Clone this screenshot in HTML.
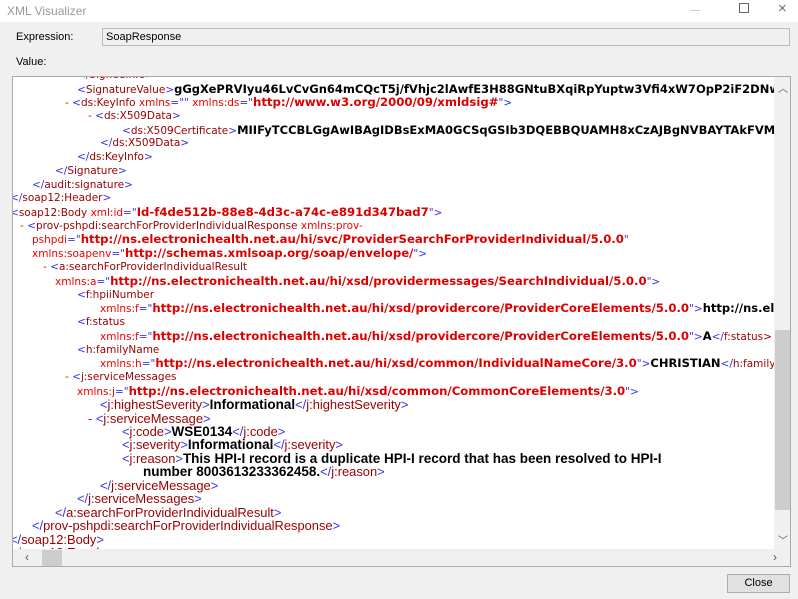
<!DOCTYPE html>
<html><head><meta charset="utf-8"><style>
*{margin:0;padding:0;box-sizing:border-box}
body{width:798px;height:599px;background:#f0f0f0;font-family:"Liberation Sans",sans-serif;position:relative;overflow:hidden}
.title{position:absolute;left:0;top:0;width:798px;height:22px;background:#fff;font-size:12px;color:#999}
.lbl{position:absolute;font-size:11px;color:#000}
.box{position:absolute;left:12px;top:76px;width:779px;height:491px;border:1px solid #aaa;background:#fff;overflow:hidden}
.ln{position:absolute;white-space:nowrap;font-family:"DejaVu Sans",sans-serif;font-size:10.5px;line-height:13px}
.t{color:#3333ee}.n{color:#990000}.a{color:#ee0000}.v{color:#dd0000;font-weight:bold;font-size:11.7px}.b{color:#000;font-weight:bold;font-size:11.5px}.d{color:#ee0000}
.c{font-family:"Liberation Sans",sans-serif;font-size:12.9px}
.c .b{font-size:13.5px}
.vs{position:absolute;left:761px;top:0;width:17px;height:472px;background:#f0f0f0}
.hs{position:absolute;left:0;top:472px;width:778px;height:18px;background:#f0f0f0}
</style></head><body>
<div class="title"><span style="position:absolute;left:7px;top:4px">XML Visualizer</span>
<span style="position:absolute;left:690px;top:10px;width:10px;height:1px;background:#ccc"></span>
<span style="position:absolute;left:739px;top:3px;width:10px;height:10px;border:1px solid #666"></span>
<span style="position:absolute;left:778px;top:0px;font-size:15px;color:#666">×</span></div>
<div class="lbl" style="left:16px;top:31px">Expression:</div>
<div style="position:absolute;left:102px;top:28px;width:688px;height:18px;border:1px solid #bbb;background:#f0f0f0;font-size:11px;padding:2px 3px">SoapResponse</div>
<div class="lbl" style="left:16px;top:56px">Value:</div>
<div class="box">
<div class="ln" style="left:64px;top:-8px"><span class="t">&lt;/</span><span class="n">SignedInfo</span><span class="t">&gt;</span></div>
<div class="ln" style="left:64px;top:6px"><span class="t">&lt;</span><span class="n">SignatureValue</span><span class="t">&gt;</span><span class="b">gGgXePRVIyu46LvCvGn64mCQcT5j/fVhjc2lAwfE3H88GNtuBXqiRpYuptw3Vfi4xW7OpP2iF2DNw</span></div>
<div class="ln" style="left:52px;top:19px"><span class="d">-</span> <span class="t">&lt;</span><span class="n">ds:KeyInfo</span> <span class="a">xmlns</span><span class="t">=""</span> <span class="a">xmlns:ds</span><span class="t">="</span><span class="v">http://www.w3.org/2000/09/xmldsig#</span><span class="t">"&gt;</span></div>
<div class="ln" style="left:75px;top:33px"><span class="d">-</span> <span class="t">&lt;</span><span class="n">ds:X509Data</span><span class="t">&gt;</span></div>
<div class="ln" style="left:109px;top:47px"><span class="t">&lt;</span><span class="n">ds:X509Certificate</span><span class="t">&gt;</span><span class="b">MIIFyTCCBLGgAwIBAgIDBsExMA0GCSqGSIb3DQEBBQUAMH8xCzAJBgNVBAYTAkFVM</span></div>
<div class="ln" style="left:87px;top:60px"><span class="t">&lt;/</span><span class="n">ds:X509Data</span><span class="t">&gt;</span></div>
<div class="ln" style="left:64px;top:74px"><span class="t">&lt;/</span><span class="n">ds:KeyInfo</span><span class="t">&gt;</span></div>
<div class="ln" style="left:42px;top:88px"><span class="t">&lt;/</span><span class="n">Signature</span><span class="t">&gt;</span></div>
<div class="ln" style="left:19px;top:102px"><span class="t">&lt;/</span><span class="n">audit:signature</span><span class="t">&gt;</span></div>
<div class="ln" style="left:-3px;top:115px"><span class="t">&lt;/</span><span class="n">soap12:Header</span><span class="t">&gt;</span></div>
<div class="ln" style="left:-3px;top:129px"><span class="t">&lt;</span><span class="n">soap12:Body</span> <span class="a">xml:id</span><span class="t">="</span><span class="v">Id-f4de512b-88e8-4d3c-a74c-e891d347bad7</span><span class="t">"&gt;</span></div>
<div class="ln" style="left:7px;top:143px"><span class="d">-</span> <span class="t">&lt;</span><span class="n">prov-pshpdi:searchForProviderIndividualResponse</span> <span class="a">xmlns:prov-</span></div>
<div class="ln" style="left:19px;top:156px"><span class="a">pshpdi</span><span class="t">="</span><span class="v">http://ns.electronichealth.net.au/hi/svc/ProviderSearchForProviderIndividual/5.0.0</span><span class="t">"</span></div>
<div class="ln" style="left:19px;top:170px"><span class="a">xmlns:soapenv</span><span class="t">="</span><span class="v">http://schemas.xmlsoap.org/soap/envelope/</span><span class="t">"&gt;</span></div>
<div class="ln" style="left:30px;top:184px"><span class="d">-</span> <span class="t">&lt;</span><span class="n">a:searchForProviderIndividualResult</span></div>
<div class="ln" style="left:42px;top:198px"><span class="a">xmlns:a</span><span class="t">="</span><span class="v">http://ns.electronichealth.net.au/hi/xsd/providermessages/SearchIndividual/5.0.0</span><span class="t">"&gt;</span></div>
<div class="ln" style="left:64px;top:212px"><span class="t">&lt;</span><span class="n">f:hpiiNumber</span></div>
<div class="ln" style="left:87px;top:225px"><span class="a">xmlns:f</span><span class="t">="</span><span class="v">http://ns.electronichealth.net.au/hi/xsd/providercore/ProviderCoreElements/5.0.0</span><span class="t">"&gt;</span><span class="b">http://ns.electronichealth</span></div>
<div class="ln" style="left:64px;top:239px"><span class="t">&lt;</span><span class="n">f:status</span></div>
<div class="ln" style="left:87px;top:253px"><span class="a">xmlns:f</span><span class="t">="</span><span class="v">http://ns.electronichealth.net.au/hi/xsd/providercore/ProviderCoreElements/5.0.0</span><span class="t">"&gt;</span><span class="b">A</span><span class="t">&lt;/</span><span class="n">f:status&gt;</span></div>
<div class="ln" style="left:64px;top:267px"><span class="t">&lt;</span><span class="n">h:familyName</span></div>
<div class="ln" style="left:87px;top:280px"><span class="a">xmlns:h</span><span class="t">="</span><span class="v">http://ns.electronichealth.net.au/hi/xsd/common/IndividualNameCore/3.0</span><span class="t">"&gt;</span><span class="b">CHRISTIAN</span><span class="t">&lt;/</span><span class="n">h:familyName&gt;</span></div>
<div class="ln" style="left:52px;top:294px"><span class="d">-</span> <span class="t">&lt;</span><span class="n">j:serviceMessages</span></div>
<div class="ln" style="left:64px;top:308px"><span class="a">xmlns:j</span><span class="t">="</span><span class="v">http://ns.electronichealth.net.au/hi/xsd/common/CommonCoreElements/3.0</span><span class="t">"&gt;</span></div>
<div class="ln c" style="left:87px;top:321px"><span class="t">&lt;</span><span class="n">j:highestSeverity</span><span class="t">&gt;</span><span class="b">Informational</span><span class="t">&lt;/</span><span class="n">j:highestSeverity</span><span class="t">&gt;</span></div>
<div class="ln c" style="left:75px;top:335px"><span class="d">-</span> <span class="t">&lt;</span><span class="n">j:serviceMessage</span><span class="t">&gt;</span></div>
<div class="ln c" style="left:109px;top:348px"><span class="t">&lt;</span><span class="n">j:code</span><span class="t">&gt;</span><span class="b">WSE0134</span><span class="t">&lt;/</span><span class="n">j:code</span><span class="t">&gt;</span></div>
<div class="ln c" style="left:109px;top:361px"><span class="t">&lt;</span><span class="n">j:severity</span><span class="t">&gt;</span><span class="b">Informational</span><span class="t">&lt;/</span><span class="n">j:severity</span><span class="t">&gt;</span></div>
<div class="ln c" style="left:109px;top:375px"><span class="t">&lt;</span><span class="n">j:reason</span><span class="t">&gt;</span><span class="b">This HPI-I record is a duplicate HPI-I record that has been resolved to HPI-I</span></div>
<div class="ln c" style="left:130px;top:388px"><span class="b">number 8003613233362458.</span><span class="t">&lt;/</span><span class="n">j:reason</span><span class="t">&gt;</span></div>
<div class="ln c" style="left:87px;top:402px"><span class="t">&lt;/</span><span class="n">j:serviceMessage</span><span class="t">&gt;</span></div>
<div class="ln c" style="left:64px;top:415px"><span class="t">&lt;/</span><span class="n">j:serviceMessages</span><span class="t">&gt;</span></div>
<div class="ln c" style="left:42px;top:429px"><span class="t">&lt;/</span><span class="n">a:searchForProviderIndividualResult</span><span class="t">&gt;</span></div>
<div class="ln c" style="left:19px;top:442px"><span class="t">&lt;/</span><span class="n">prov-pshpdi:searchForProviderIndividualResponse</span><span class="t">&gt;</span></div>
<div class="ln c" style="left:-3px;top:456px"><span class="t">&lt;/</span><span class="n">soap12:Body</span><span class="t">&gt;</span></div>
<div class="ln c" style="left:-3px;top:469px"><span class="t">&lt;/</span><span class="n">soap12:Envelope</span><span class="t">&gt;</span></div>
<div class="vs"><span style="position:absolute;left:4px;top:3px;font-size:10px;color:#555">︿</span>
<div style="position:absolute;left:1px;top:253px;width:15px;height:180px;background:#cdcdcd"></div>
<span style="position:absolute;left:4px;top:455px;font-size:10px;color:#555">﹀</span></div>
<div class="hs"><span style="position:absolute;left:12px;top:1px;font-size:12px;color:#555">‹</span>
<div style="position:absolute;left:29px;top:1px;width:20px;height:16px;background:#cdcdcd"></div>
<span style="position:absolute;left:760px;top:1px;font-size:12px;color:#555">›</span></div>
</div>
<div style="position:absolute;left:727px;top:574px;width:63px;height:19px;border:1px solid #adadad;background:#e1e1e1;font-size:11px;text-align:center;line-height:17px">Close</div>
</body></html>
